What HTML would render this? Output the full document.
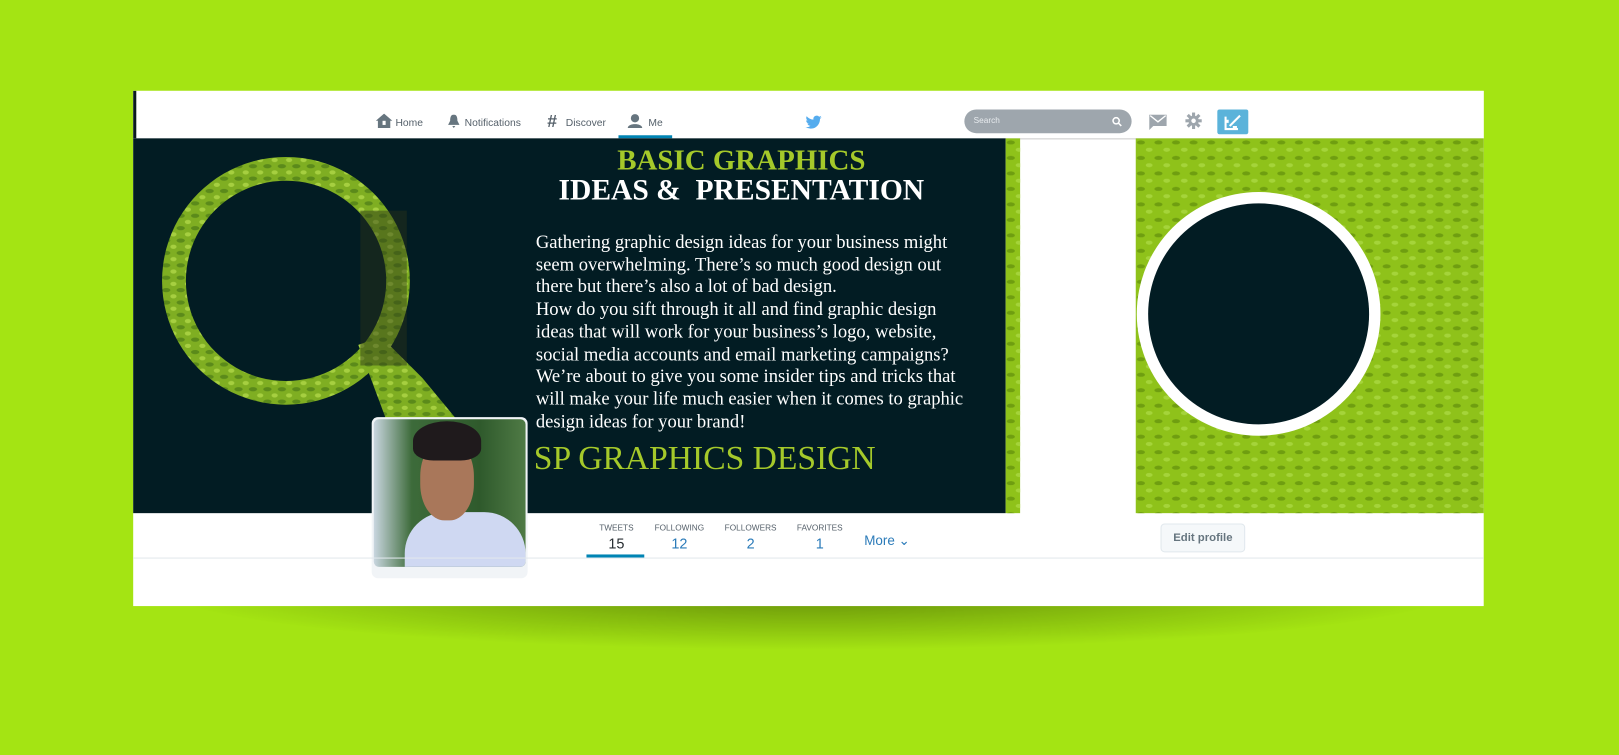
<!DOCTYPE html>
<html><head><meta charset="utf-8"><style>
*{margin:0;padding:0;box-sizing:border-box}
body{width:1619px;height:755px;background:#a4e413;position:relative;overflow:hidden;font-family:"Liberation Sans",sans-serif}
#w{position:absolute;left:0;top:0;width:1568px;height:731px;transform:scale(1.0325);transform-origin:0 0}
.shadow{position:absolute;left:150px;top:570px;width:1270px;height:60px;background:radial-gradient(ellipse at 50% 0%,rgba(40,60,0,.55),rgba(40,60,0,0) 70%);}
.card{position:absolute;left:129px;top:88px;width:1308px;height:499px;background:#fff}
.nav{position:absolute;left:0;top:0;width:1308px;height:46px;background:#fff;border-left:3px solid #0b1a1f}
.nav span{position:absolute;top:26px;font-size:10px;color:#55606a}
.ban{position:absolute;left:0;top:46px;width:845px;height:363px;background:#021c23;overflow:hidden}
.pat{background-color:#8fc21a;background-image:radial-gradient(ellipse 6px 3px at 5px 4px,#6f9e10 60%,transparent 70%),radial-gradient(ellipse 5px 3px at 13px 11px,#a5d43a 60%,transparent 70%);background-size:17px 15px}
.stats div{position:absolute;text-align:center;color:#55606a;font-size:8px}
.stats b{display:block;font-weight:normal;font-size:14px;color:#2b7bb9;margin-top:2px}
</style></head><body><div id="w">
<div class="shadow"></div>
<div class="card">
 <div class="nav">
  <svg style="position:absolute;left:232px;top:22px" width="16" height="14" viewBox="0 0 16 14"><path d="M8 0L0 7h2v7h12V7h2z" fill="#66757f"/><rect x="6.5" y="7" width="3" height="4" fill="#fff"/></svg>
  <span style="left:251px">Home</span>
  <svg style="position:absolute;left:301px;top:23px" width="13" height="13" viewBox="0 0 13 13"><path d="M6.5 0C3 0 3 4 3 6L1 10h11L10 6C10 4 10 0 6.5 0zM5 11h3l-1.5 2z" fill="#66757f"/></svg>
  <span style="left:318px">Notifications</span>
  <span style="left:398px;top:20px;font-size:17px;font-weight:bold;color:#55606a">#</span>
  <span style="left:416px">Discover</span>
  <svg style="position:absolute;left:475px;top:22px" width="16" height="14" viewBox="0 0 16 14"><circle cx="8" cy="4.5" r="4" fill="#66757f"/><path d="M1 14c0-5 14-5 14 0z" fill="#66757f"/></svg>
  <span style="left:496px">Me</span>
  <div style="position:absolute;left:467px;top:43px;width:52px;height:3px;background:#0084b4"></div>
  <svg style="position:absolute;left:648px;top:24px" width="16" height="13" viewBox="0 0 24 20"><path d="M24 2.4a9.8 9.8 0 01-2.8.8A4.9 4.9 0 0023.3.4a9.8 9.8 0 01-3.1 1.2A4.9 4.9 0 0011.8 6 14 14 0 011.7.9a4.9 4.9 0 001.5 6.6A4.9 4.9 0 01.9 6.9a4.9 4.9 0 004 4.8 4.9 4.9 0 01-2.2.1 4.9 4.9 0 004.6 3.4A9.9 9.9 0 010 17.2 14 14 0 007.5 19.4c9 0 14-7.5 14-14v-.6A10 10 0 0024 2.4z" fill="#55acee"/></svg>
  <div style="position:absolute;left:802px;top:18px;width:162px;height:23px;border-radius:12px;background:#9ea6ad"><span style="left:9px;top:6px;font-size:8px;color:#e8ecef">Search</span><svg style="position:absolute;left:143px;top:7px" width="10" height="10" viewBox="0 0 10 10"><circle cx="4" cy="4" r="3" fill="none" stroke="#fff" stroke-width="1.5"/><path d="M6 6l3 3" stroke="#fff" stroke-width="1.5"/></svg></div>
  <svg style="position:absolute;left:981px;top:23px" width="17" height="15" viewBox="0 0 17 15"><path d="M0 0h17v11H4l-4 4z" fill="#9ea6ad"/><path d="M1 1l7.5 6L16 1" stroke="#fff" stroke-width="1.3" fill="none"/></svg>
  <svg style="position:absolute;left:1016px;top:21px" width="16" height="16" viewBox="0 0 16 16"><g fill="#9ea6ad"><circle cx="8" cy="8" r="5"/><rect x="6.5" y="0" width="3" height="16"/><rect x="0" y="6.5" width="16" height="3"/><rect x="6.5" y="0" width="3" height="16" transform="rotate(45 8 8)"/><rect x="6.5" y="0" width="3" height="16" transform="rotate(-45 8 8)"/></g><circle cx="8" cy="8" r="2.2" fill="#fff"/></svg>
  <div style="position:absolute;left:1047px;top:18px;width:30px;height:24px;background:#5bb3da;border-radius:2px"><svg style="position:absolute;left:6px;top:4px" width="18" height="17" viewBox="0 0 18 17"><path d="M2 3v12h12M16 2L6 12M4 6v3M9 13h4" stroke="#fff" stroke-width="2" fill="none"/></svg></div>
 </div>
 <div style="position:absolute;left:0;top:46px;width:1308px;height:1px;background:#ccc"></div>
 <div class="ban">
  <svg style="position:absolute;left:0;top:0" width="400" height="363">
   <defs><pattern id="p" width="14" height="12" patternUnits="userSpaceOnUse"><rect width="14" height="12" fill="#7fae22"/><ellipse cx="4" cy="3" rx="4" ry="2" fill="#5b8a1a"/><ellipse cx="11" cy="9" rx="3" ry="2" fill="#a6cf40"/></pattern></defs>
   <path d="M148 18a120 120 0 1 1 -0.1 0zM148 41a97 97 0 1 0 0.1 0z" fill="url(#p)" fill-rule="evenodd"/>
   <path d="M218 200l22 -8 40 40 48 58 -28 40 -54 -55z" fill="url(#p)"/>
   <rect x="220" y="70" width="45" height="150" fill="#2a3218" opacity=".45"/>
  </svg>
  <div style="position:absolute;left:389px;top:8px;width:400px;text-align:center;font-family:'Liberation Serif',serif;font-weight:bold">
   <div style="color:#a5c92a;font-size:28px;line-height:28px">BASIC GRAPHICS</div>
   <div style="color:#fff;font-size:28.6px;line-height:30px">IDEAS &amp;&nbsp; PRESENTATION</div>
  </div>
  <div style="position:absolute;left:390px;top:90px;width:420px;color:#fff;font-family:'Liberation Serif',serif;font-size:18px;line-height:21.7px">Gathering graphic design ideas for your business might seem overwhelming. There’s so much good design out there but there’s also a lot of bad design.<br>How do you sift through it all and find graphic design ideas that will work for your business’s logo, website, social media accounts and email marketing campaigns? We’re about to give you some insider tips and tricks that will make your life much easier when it comes to graphic design ideas for your brand!</div>
  <div style="position:absolute;left:388px;top:292px;color:#a5c92a;font-family:'Liberation Serif',serif;font-size:32.5px">SP GRAPHICS DESIGN</div>
 </div>
 <div class="pat" style="position:absolute;left:845px;top:46px;width:14px;height:363px"></div>
 <div class="pat" style="position:absolute;left:971px;top:46px;width:337px;height:363px"></div>
 <div style="position:absolute;left:972px;top:98px;width:236px;height:236px;border-radius:50%;background:#fff"></div>
 <div style="position:absolute;left:983px;top:109px;width:214px;height:214px;border-radius:50%;background:#021c23"></div>
 <div style="position:absolute;left:231px;top:316px;width:151px;height:156px;border-radius:6px;background:#f1f4f7"></div>
 <div style="position:absolute;left:233px;top:318px;width:147px;height:143px;border-radius:5px;overflow:hidden;background:linear-gradient(90deg,#c9d6e0 0%,#3d6b3a 25%,#2f5a2c 70%,#4f7a45 100%)">
  <div style="position:absolute;left:30px;top:90px;width:117px;height:60px;border-radius:40px 40px 0 0;background:#cfd8f2"></div>
  <div style="position:absolute;left:45px;top:20px;width:52px;height:78px;border-radius:45%;background:#a9775a"></div>
  <div style="position:absolute;left:38px;top:2px;width:66px;height:38px;border-radius:50% 50% 30% 30%;background:#1f1a1c"></div>
 </div>
 <div class="stats">
  <div style="left:446px;top:419px;width:44px">TWEETS<b style="color:#292f33">15</b></div>
  <div style="left:503px;top:419px;width:52px">FOLLOWING<b>12</b></div>
  <div style="left:570px;top:419px;width:56px">FOLLOWERS<b>2</b></div>
  <div style="left:640px;top:419px;width:50px">FAVORITES<b>1</b></div>
 </div>
 <div style="position:absolute;left:439px;top:449px;width:56px;height:3px;background:#0084b4"></div>
 <div style="position:absolute;left:708px;top:428px;color:#2b7bb9;font-size:13px">More ⌄</div>
 <div style="position:absolute;left:995px;top:419px;width:82px;height:28px;border:1px solid #e1e8ed;border-radius:4px;background:#f5f8fa;color:#66757f;font-size:11px;font-weight:bold;text-align:center;line-height:26px">Edit profile</div>
 <div style="position:absolute;left:0;top:452px;width:1308px;height:1px;background:#e1e8ed"></div>
</div>
</div></body></html>
